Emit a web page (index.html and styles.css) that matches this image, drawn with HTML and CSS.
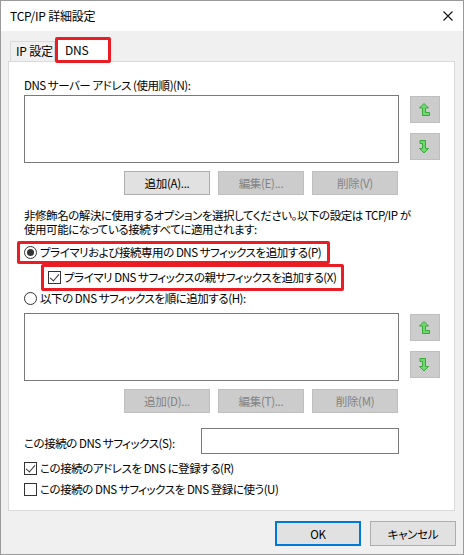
FILE: index.html
```html
<!DOCTYPE html>
<html lang="ja">
<head>
    <meta charset="UTF-8">
    <title>TCP/IP 詳細設定</title>
    <link rel="stylesheet" href="styles.css">
</head>
<body>
    <div class="window">
        <div class="titlebar">
            <span class="title">TCP/IP 詳細設定</span>
            <svg class="close" width="10" height="10" viewBox="0 0 10 10">
                <path d="M0.5 0.5 L9.5 9.5 M9.5 0.5 L0.5 9.5" stroke="#111" stroke-width="1.1" fill="none"/>
            </svg>
        </div>

        <div class="dialog">
            <div class="tabs">
                <div class="tab">IP 設定</div>
                <div class="tab active mark">DNS</div>
            </div>

            <div class="panel">
                <div class="label">DNS サーバー アドレス (使用順)(N):</div>
                <div class="list-row">
                    <div class="listbox"></div>
                    <div class="order-btns">
                        <button class="arrow-btn">
                            <svg width="12" height="14" viewBox="0 0 12 14"><polygon points="5,0.5 9.5,5 6.5,5 6.5,9.5 10.5,9.5 10.5,12.5 3.5,12.5 3.5,5 0.5,5" fill="#6fd86f" stroke="#38a838" stroke-width="1"/></svg>
                        </button>
                        <button class="arrow-btn">
                            <svg width="12" height="14" viewBox="0 0 12 14"><polygon points="1,0.5 6.5,0.5 6.5,8.5 9.5,8.5 5,13 0.5,8.5 3.5,8.5 3.5,3.5 1,3.5" fill="#6fd86f" stroke="#38a838" stroke-width="1"/></svg>
                        </button>
                    </div>
                </div>
                <div class="btn-row">
                    <button class="btn">追加(A)...</button>
                    <button class="btn" disabled>編集(E)...</button>
                    <button class="btn" disabled>削除(V)</button>
                </div>

                <p class="desc">非修飾名の解決に使用するオプションを選択してください。以下の設定は TCP/IP が<br>使用可能になっている接続すべてに適用されます:</p>

                <div class="option mark first">
                    <span class="radio checked"></span>プライマリおよび接続専用の DNS サフィックスを追加する(P)
                </div>
                <div class="option mark sub">
                    <span class="check checked"></span>プライマリ DNS サフィックスの親サフィックスを追加する(X)
                </div>
                <div class="option third">
                    <span class="radio"></span>以下の DNS サフィックスを順に追加する(H):
                </div>

                <div class="list-row second">
                    <div class="listbox"></div>
                    <div class="order-btns">
                        <button class="arrow-btn">
                            <svg width="12" height="14" viewBox="0 0 12 14"><polygon points="5,0.5 9.5,5 6.5,5 6.5,9.5 10.5,9.5 10.5,12.5 3.5,12.5 3.5,5 0.5,5" fill="#6fd86f" stroke="#38a838" stroke-width="1"/></svg>
                        </button>
                        <button class="arrow-btn">
                            <svg width="12" height="14" viewBox="0 0 12 14"><polygon points="1,0.5 6.5,0.5 6.5,8.5 9.5,8.5 5,13 0.5,8.5 3.5,8.5 3.5,3.5 1,3.5" fill="#6fd86f" stroke="#38a838" stroke-width="1"/></svg>
                        </button>
                    </div>
                </div>
                <div class="btn-row">
                    <button class="btn" disabled>追加(D)...</button>
                    <button class="btn" disabled>編集(T)...</button>
                    <button class="btn" disabled>削除(M)</button>
                </div>

                <div class="suffix-row">
                    <span>この接続の DNS サフィックス(S):</span>
                    <div class="textbox"></div>
                </div>

                <div class="option reg">
                    <span class="check checked"></span>この接続のアドレスを DNS に登録する(R)
                </div>
                <div class="option reg2">
                    <span class="check"></span>この接続の DNS サフィックスを DNS 登録に使う(U)
                </div>
            </div>

            <div class="footer">
                <button class="btn default">OK</button>
                <button class="btn">キャンセル</button>
            </div>
        </div>
    </div>
</body>
</html>
```

FILE: styles.css
```css
* {
    margin: 0;
    padding: 0;
    box-sizing: border-box;
}

body {
    background: #ffffff;
    font-family: "Noto Sans CJK JP", "Noto Sans", sans-serif;
    font-size: 11.5px;
    letter-spacing: -0.45px;
    font-feature-settings: "palt";
    color: #000;
}

.window {
    width: 464px;
    height: 555px;
    border: 1px solid #9a9a9a;
    background: #f0f0f0;
    display: flex;
    flex-direction: column;
}

.titlebar {
    height: 30px;
    background: #ffffff;
    display: flex;
    align-items: center;
    justify-content: space-between;
    padding: 0 10px 0 9px;
}

.title {
    font-size: 12px;
    line-height: 14px;
    letter-spacing: -0.2px;
}

.close {
    display: block;
}

.dialog {
    padding: 6px 7px 0 7px;
    display: flex;
    flex-direction: column;
}

.tabs {
    display: flex;
    align-items: flex-end;
    height: 26px;
    margin-bottom: -2px;
    padding-left: 2px;
    position: relative;
    z-index: 1;
}

.tab {
    height: 20px;
    width: 45px;
    margin-bottom: 2px;
    border: 1px solid #d9d9d9;
    border-bottom: none;
    background: #f0f0f0;
    line-height: 18px;
    padding-left: 5px;
    font-size: 12px;
    letter-spacing: -0.2px;
}

.tab.active {
    width: 56px;
    height: 26px;
    margin-bottom: 0;
    background: #ffffff;
    line-height: 20px;
    padding-left: 7px;
}

.mark {
    border: 3px solid #ea1c24;
    border-radius: 2px;
}

.tab.mark {
    border-bottom: 3px solid #ea1c24;
}

.panel {
    width: 447px;
    height: 450px;
    background: #ffffff;
    border: 1px solid #d9d9d9;
    padding: 16px 14px 0 15px;
}

.label {
    line-height: 15px;
}

.list-row {
    display: flex;
    gap: 11px;
    margin-top: 2px;
}

.list-row.second {
    margin-top: 7px;
}

.listbox {
    width: 375px;
    height: 68px;
    border: 1px solid #7a7a7a;
    background: #fff;
}

.order-btns {
    display: flex;
    flex-direction: column;
    gap: 10px;
    margin-top: 1px;
}

.arrow-btn {
    width: 30px;
    height: 27px;
    background: #cccccc;
    border: 1px solid #bfbfbf;
    display: flex;
    align-items: center;
    justify-content: center;
}

.btn-row {
    width: 375px;
    display: flex;
    justify-content: flex-end;
    gap: 8px;
    padding-right: 1px;
    margin-top: 8px;
}

.btn {
    width: 86px;
    height: 24px;
    font-family: inherit;
    font-size: 11.5px;
    letter-spacing: -0.3px;
    font-feature-settings: "palt";
    background: #e1e1e1;
    border: 1px solid #adadad;
    color: #000;
}

.btn:disabled {
    background: #cccccc;
    border-color: #bfbfbf;
    color: #838383;
}

.desc {
    margin-top: 13px;
    line-height: 14px;
    white-space: nowrap;
}

.option {
    display: flex;
    align-items: center;
    line-height: 15px;
    white-space: nowrap;
}

.option.first {
    width: fit-content;
    height: 23px;
    margin: 5px 0 0 -7px;
    padding: 0 6px 0 4px;
}

.option.sub {
    width: fit-content;
    height: 27px;
    margin: 0 0 0 17px;
    padding: 0 5px 0 4px;
}

.option.third {
    margin-top: 0;
    height: 15px;
}

.option.reg {
    margin-top: 7px;
}

.option.reg2 {
    margin-top: 6px;
}

.radio {
    width: 13px;
    height: 13px;
    border: 1px solid #333;
    border-radius: 50%;
    margin-right: 3px;
    display: flex;
    align-items: center;
    justify-content: center;
    flex-shrink: 0;
}

.radio.checked::after {
    content: "";
    width: 7px;
    height: 7px;
    border-radius: 50%;
    background: #333;
}

.check {
    width: 13px;
    height: 13px;
    border: 1px solid #333;
    margin-right: 3px;
    position: relative;
    flex-shrink: 0;
}

.check.checked::after {
    content: "";
    position: absolute;
    left: 3px;
    top: 0px;
    width: 4px;
    height: 8px;
    border: solid #333;
    border-width: 0 1.3px 1.3px 0;
    transform: rotate(40deg);
}

.suffix-row {
    display: flex;
    align-items: center;
    justify-content: space-between;
    width: 375px;
    margin-top: 15px;
}

.suffix-row span {
    margin-top: 3px;
}

.textbox {
    width: 198px;
    height: 26px;
    border: 1px solid #7a7a7a;
}

.footer {
    display: flex;
    justify-content: flex-end;
    gap: 9px;
    padding: 10px 0 0 0;
}

.btn.default {
    border: 2px solid #0078d7;
}

.footer .btn {
    height: 25px;
}
```
